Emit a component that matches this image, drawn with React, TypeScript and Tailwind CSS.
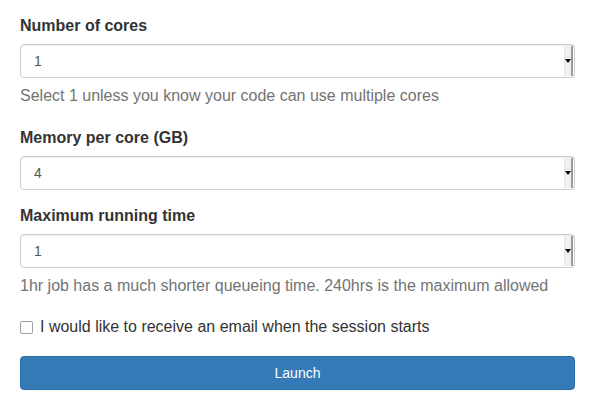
import React from 'react';

function Select({ value }: { value: string }) {
    return (
        <div className="relative h-[34px] w-full rounded border border-[#ccc] bg-white shadow-[inset_0_1px_1px_rgba(0,0,0,0.075)]">
            <span className="absolute left-[13px] top-[7px] text-[14px] leading-[18px] text-[#555]">{value}</span>
            <div className="absolute right-[1px] top-[1px] bottom-[1px] flex w-[9px] items-center justify-center border-l border-[#e4e4e4] bg-[#f0f0f0] border-r-2 border-r-[#999]">
                <div className="h-0 w-0 border-x-[3px] border-t-[4px] border-x-transparent border-t-black" />
            </div>
        </div>
    );
}

export default function App() {
    return (
        <div className="bg-white pl-[20px] pr-[30px] pt-[15px] text-[#333]" style={{ fontFamily: '"Liberation Sans", Arial, sans-serif' }}>
            <div>
                <label className="block text-[16px] font-bold leading-[22px]">Number of cores</label>
                <div className="mt-[7px]">
                    <Select value="1" />
                </div>
                <p className="mt-[6px] text-[16px] leading-[24px] text-[#737373]">Select 1 unless you know your code can use multiple cores</p>
            </div>

            <div className="mt-[19px]">
                <label className="block text-[16px] font-bold leading-[22px]">Memory per core (GB)</label>
                <div className="mt-[7px]">
                    <Select value="4" />
                </div>
            </div>

            <div className="mt-[15px]">
                <label className="block text-[16px] font-bold leading-[22px]">Maximum running time</label>
                <div className="mt-[7px]">
                    <Select value="1" />
                </div>
                <p className="mt-[6px] text-[16px] leading-[24px] text-[#737373]">1hr job has a much shorter queueing time. 240hrs is the maximum allowed</p>
            </div>

            <label className="mt-[17px] flex items-center gap-[7px] text-[16px] leading-[24px]">
                <span className="inline-block h-[13px] w-[13px] rounded-[2px] border border-[#a0a0a0] bg-white" />
                I would like to receive an email when the session starts
            </label>

            <button className="mt-[17px] h-[34px] w-full rounded border border-[#2e6da4] bg-[#337ab7] text-[14px] text-white">
                Launch
            </button>
        </div>
    );
}
